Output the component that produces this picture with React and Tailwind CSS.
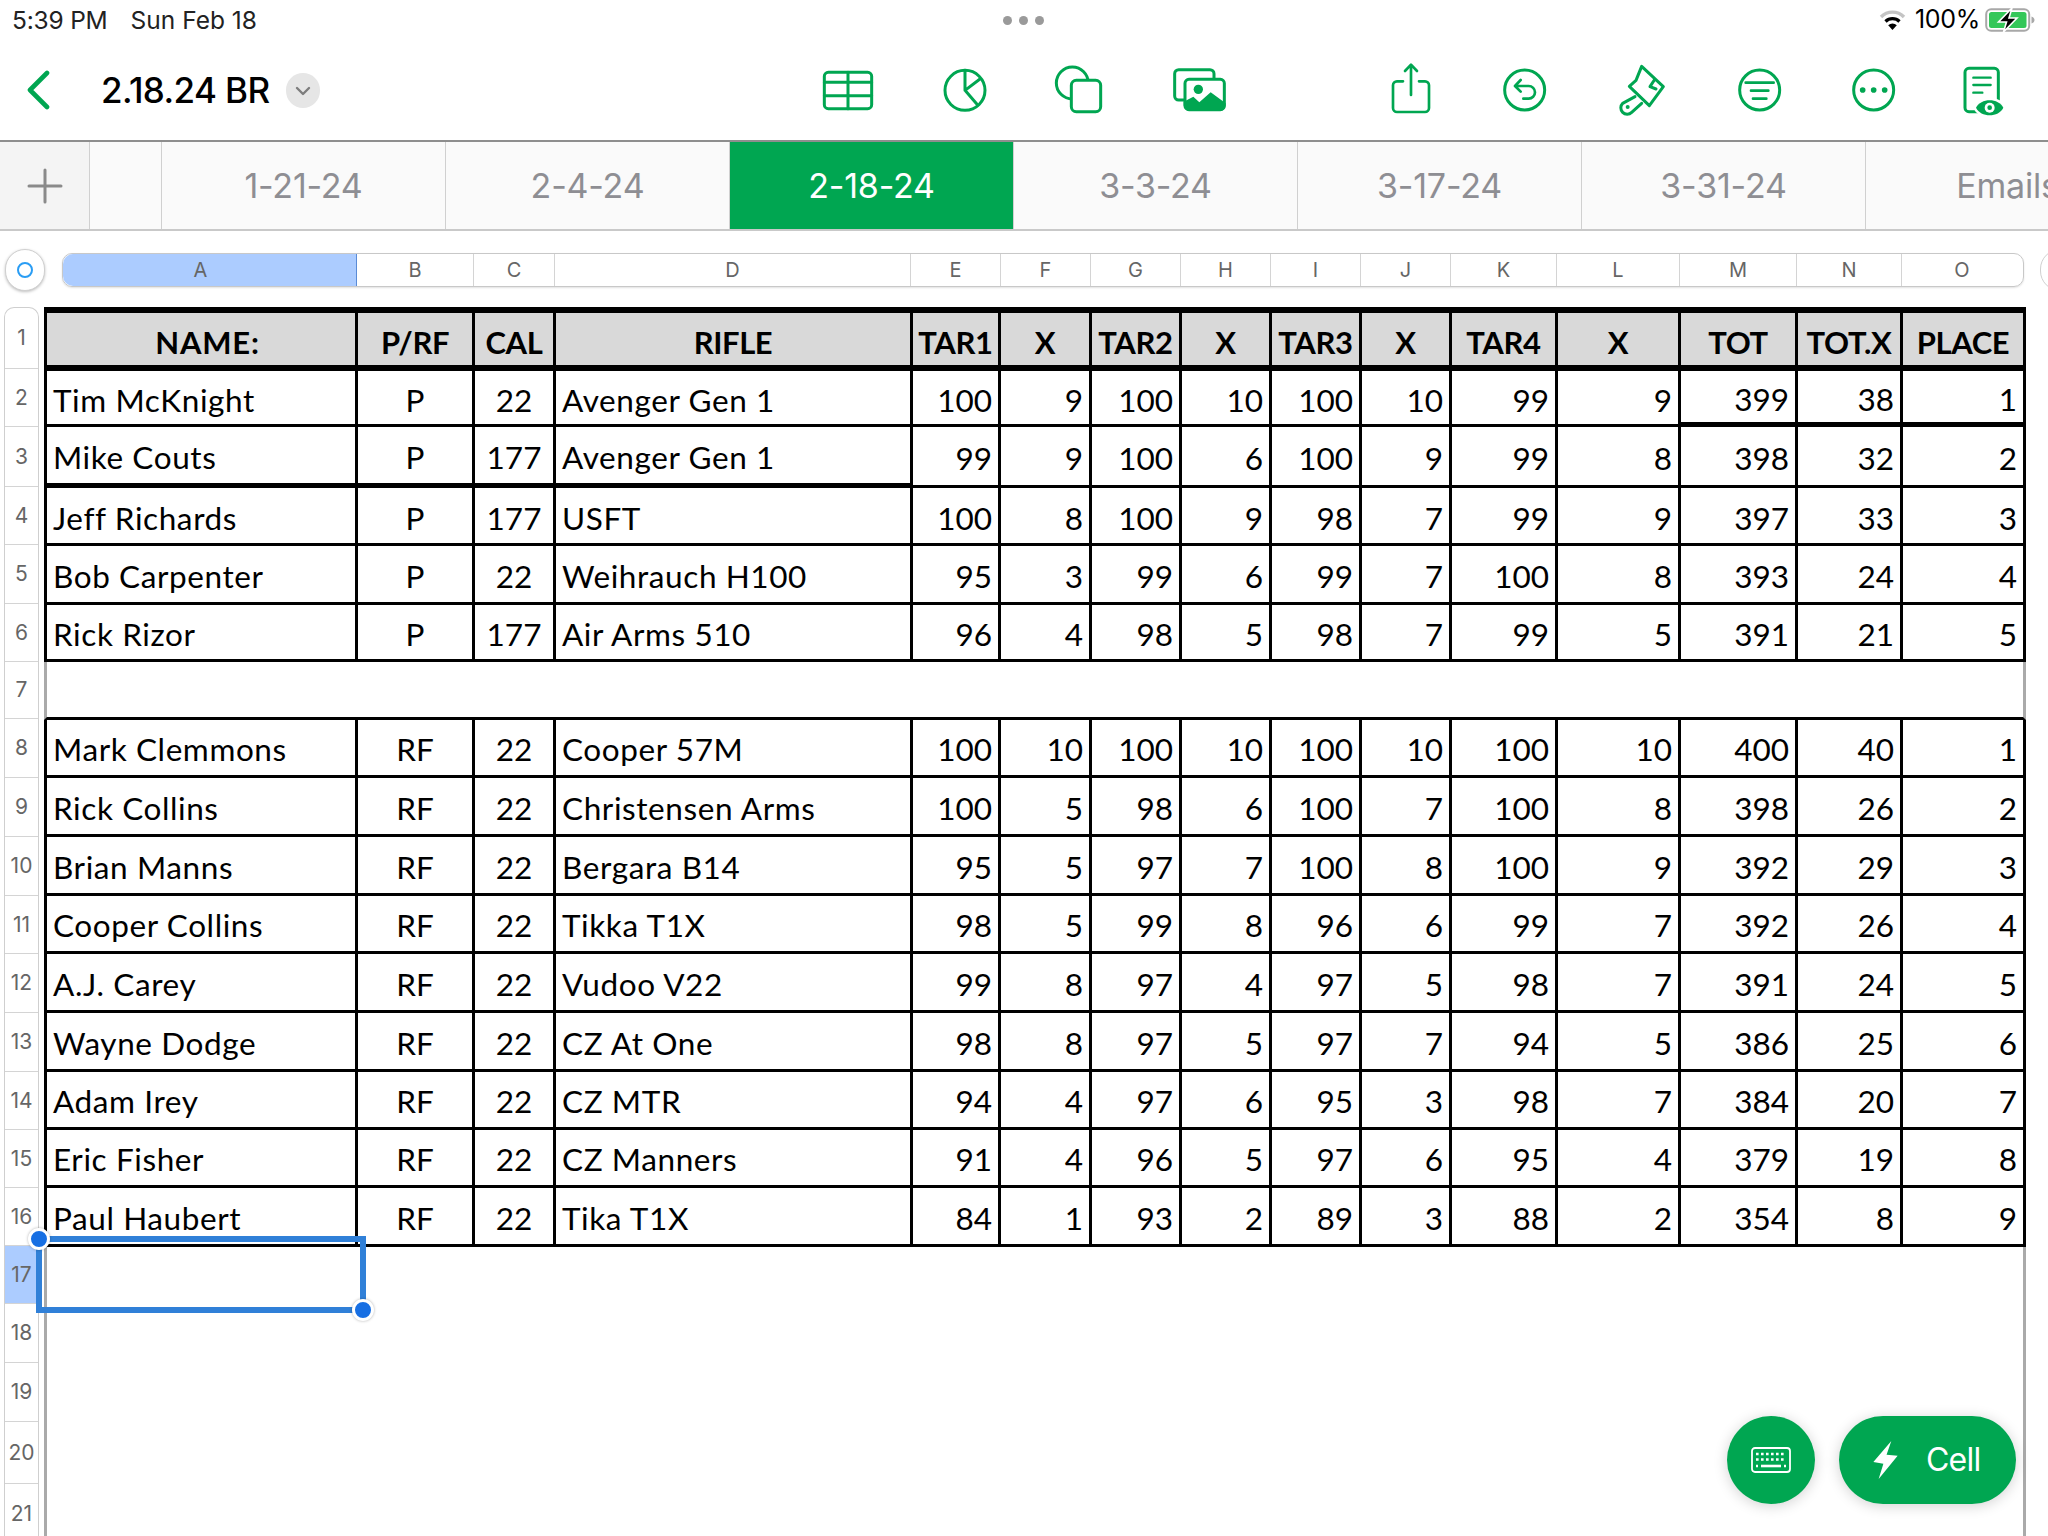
import React from "react";

const G = "#00a651";
const colW = ["w-[311px]","w-[117px]","w-[81px]","w-[357px]","w-[88px]","w-[91px]","w-[90px]","w-[90px]","w-[90px]","w-[90px]","w-[106px]","w-[123px]","w-[117px]","w-[105px]","w-[123px]"];
const align = (i) => (i === 0 || i === 3 ? "justify-start pl-[6px] tracking-[0.6px]" : i === 1 || i === 2 ? "justify-center" : "justify-end pr-[6px]");

const headers = ["NAME:","P/RF","CAL","RIFLE","TAR1","X","TAR2","X","TAR3","X","TAR4","X","TOT","TOT.X","PLACE"];
const group1 = [
  ["Tim McKnight","P","22","Avenger Gen 1","100","9","100","10","100","10","99","9","399","38","1"],
  ["Mike Couts","P","177","Avenger Gen 1","99","9","100","6","100","9","99","8","398","32","2"],
  ["Jeff Richards","P","177","USFT","100","8","100","9","98","7","99","9","397","33","3"],
  ["Bob Carpenter","P","22","Weihrauch H100","95","3","99","6","99","7","100","8","393","24","4"],
  ["Rick Rizor","P","177","Air Arms 510","96","4","98","5","98","7","99","5","391","21","5"],
];
const group2 = [
  ["Mark Clemmons","RF","22","Cooper 57M","100","10","100","10","100","10","100","10","400","40","1"],
  ["Rick Collins","RF","22","Christensen Arms","100","5","98","6","100","7","100","8","398","26","2"],
  ["Brian Manns","RF","22","Bergara B14","95","5","97","7","100","8","100","9","392","29","3"],
  ["Cooper Collins","RF","22","Tikka T1X","98","5","99","8","96","6","99","7","392","26","4"],
  ["A.J. Carey","RF","22","Vudoo V22","99","8","97","4","97","5","98","7","391","24","5"],
  ["Wayne Dodge","RF","22","CZ At One","98","8","97","5","97","7","94","5","386","25","6"],
  ["Adam Irey","RF","22","CZ MTR","94","4","97","6","95","3","98","7","384","20","7"],
  ["Eric Fisher","RF","22","CZ Manners","91","4","96","5","97","6","95","4","379","19","8"],
  ["Paul Haubert","RF","22","Tika T1X","84","1","93","2","89","3","88","2","354","8","9"],
];
const h1 = ["h-[56px]","h-[61px]","h-[58px]","h-[59px]","h-[57px]"];
const h2 = ["h-[58px]","h-[59px]","h-[59px]","h-[58px]","h-[59px]","h-[59px]","h-[58px]","h-[58px]","h-[59px]"];
const rowH = ["h-[61px]","h-[58px]","h-[60px]","h-[58px]","h-[59px]","h-[58px]","h-[57px]","h-[59px]","h-[59px]","h-[59px]","h-[58px]","h-[59px]","h-[59px]","h-[58px]","h-[58px]","h-[58px]","h-[58px]","h-[59px]","h-[59px]","h-[62px]","h-[60px]"];
const colBar = [
  ["A","w-[294px]"],["B","w-[117px]"],["C","w-[81px]"],["D","w-[356px]"],["E","w-[90px]"],["F","w-[90px]"],["G","w-[90px]"],["H","w-[90px]"],["I","w-[90px]"],["J","w-[90px]"],["K","w-[106px]"],["L","w-[123px]"],["M","w-[117px]"],["N","w-[105px]"],["O","w-[121px]"],
];
const tabs = ["1-21-24","2-4-24","2-18-24","3-3-24","3-17-24","3-31-24","Emails"];

function Ico({ children, className = "" }) {
  return (
    <svg width="100" height="75" viewBox="0 0 300 225" fill="none" stroke={G} strokeWidth="9" strokeLinecap="round" strokeLinejoin="round" className={"shrink-0 " + className}>
      {children}
    </svg>
  );
}

function Row({ cells, height, rowIdx, pad }) {
  return (
    <div className={"flex border-l-[3px] border-black " + height}>
      {cells.map((c, i) => {
        const thick = (rowIdx === 1 && i < 4) || (rowIdx === 0 && i >= 12);
        return (
          <div key={i} className={"flex items-center border-r-[3px] border-black text-[31.5px] text-black whitespace-nowrap " + pad + " " + colW[i] + " " + align(i) + " " + (thick ? "border-b-[5px]" : "border-b-[3px]")}>
            {c}
          </div>
        );
      })}
    </div>
  );
}

export default function App() {
  return (
    <div className="relative w-[2048px] h-[1536px] overflow-hidden bg-white [font-family:Inter,sans-serif]">
      {/* status bar */}
      <div className="relative flex items-center h-[40px] pl-[12px] pr-[13px] text-[24.5px] text-[#222]">
        <span className="tracking-[-0.2px]">5:39 PM</span>
        <span className="ml-[23px] tracking-[0px]">Sun Feb 18</span>
        <div className="absolute left-[1003px] top-[16px] flex gap-[7px]">
          <span className="w-[9px] h-[9px] rounded-full bg-[#9a9a9a]" />
          <span className="w-[9px] h-[9px] rounded-full bg-[#9a9a9a]" />
          <span className="w-[9px] h-[9px] rounded-full bg-[#9a9a9a]" />
        </div>
        <div className="ml-auto flex items-center">
          <svg width="27" height="22" viewBox="0 0 27 22" fill="none" strokeLinecap="butt">
            <path d="M2 8 A16 16 0 0 1 25 8" stroke="#c4c4c4" strokeWidth="3.4" />
            <path d="M6.5 12.5 A10 10 0 0 1 20.5 12.5" stroke="#000" strokeWidth="3.2" />
            <path d="M13.5 21 L9.2 16.2 A6.5 6.5 0 0 1 17.8 16.2 Z" fill="#000" />
          </svg>
          <span className="ml-[9px] text-[25px] tracking-[-0.3px] text-black">100%</span>
          <svg width="50" height="26" viewBox="0 0 50 26" className="ml-[5px]">
            <rect x="1.2" y="2.2" width="43" height="21.6" rx="5" fill="none" stroke="#a8a8a8" strokeWidth="2" />
            <rect x="4" y="5" width="37.5" height="16" rx="2.5" fill="#34c759" />
            <path d="M46.5 9.5 C48.5 10 49.5 11.5 49.5 13 C49.5 14.5 48.5 16 46.5 16.5 Z" fill="#a8a8a8" />
            <path d="M27 1 L13.5 15 L21.5 15 L18.5 25 L32 11 L24 11 Z" fill="#000" stroke="#fff" strokeWidth="1.6" />
          </svg>
        </div>
      </div>

      {/* toolbar */}
      <div className="flex items-start h-[102px] pt-[15px] pl-[26px] pr-[8px] border-b-2 border-[#8e8e8e]">
        <svg width="24" height="40" viewBox="0 0 24 40" fill="none" stroke={G} strokeWidth="4.6" strokeLinecap="round" strokeLinejoin="round" className="mt-[15px]">
          <path d="M21 3 L4 20 L21 37" />
        </svg>
        <div className="ml-[51px] mt-[14px] text-[35px] leading-[42px] font-medium text-black tracking-[-0.6px]">2.18.24 BR</div>
        <div className="ml-[16px] mt-[18px] flex items-center justify-center w-[34px] h-[35px] rounded-full bg-[#e6e6e6]">
          <svg width="16" height="10" viewBox="0 0 16 10" fill="none" stroke="#7d7d7d" strokeWidth="2.4" strokeLinecap="round" strokeLinejoin="round">
            <path d="M2 2 L8 8 L14 2" />
          </svg>
        </div>
        <div className="ml-auto flex items-start">
          <Ico>
            <rect x="79" y="52" width="142" height="109" rx="12" />
            <path d="M79 82 H221 M79 122 H221 M150 52 V161" />
          </Ico>
          <Ico className="ml-[17px]">
            <circle cx="150" cy="106" r="60" />
            <path d="M150 46 V106 L195 72 M150 106 L188 150" />
          </Ico>
          <Ico className="ml-[13px]">
            <circle cx="133" cy="84" r="48" />
            <rect x="130" y="76" width="88" height="94" rx="15" fill="#fff" />
          </Ico>
          <Ico className="ml-[32px]">
            <rect x="44" y="44" width="118" height="91" rx="12" />
            <rect x="75" y="73" width="118" height="91" rx="12" fill="#fff" />
            <circle cx="115" cy="103" r="14" fill={G} stroke="none" />
            <path d="M71 150 V140 L100 125 L118 142 L152 112 L197 145 V150 A18 18 0 0 1 180 168 H90 A18 18 0 0 1 71 150 Z" fill={G} stroke="none" />
          </Ico>
          <Ico className="ml-[101px]">
            <path d="M126 79 H108 A12 12 0 0 0 96 91 V159 A12 12 0 0 0 108 171 H192 A12 12 0 0 0 204 159 V91 A12 12 0 0 0 192 79 H174" strokeWidth="8" />
            <path d="M150 120 V30 M132 48 L150 29 L168 48" strokeWidth="8" />
          </Ico>
          <Ico className="ml-[29px]">
            <circle cx="104" cy="105" r="60" />
            <path d="M92 75 L75 93 L92 110 M76 93 H116 A19 19 0 0 1 116 131 H100" strokeWidth="8" />
          </Ico>
          <Ico className="ml-[10px]">
            <path d="M108 76 L125 34 L190 95 L165 72 L150 95 L168 102 M108 76 L88 94 L148 152 L190 95" strokeWidth="9" />
            <path d="M105 125 L68 145 A17 17 0 0 0 95 172 L125 145" strokeWidth="9" />
            <circle cx="83" cy="156" r="6" fill={G} stroke="none" />
          </Ico>
          <Ico className="ml-[25px]">
            <circle cx="104" cy="105" r="60" />
            <path d="M62 83 H146 M78 107 H130 M84 131 H124" strokeWidth="8" />
          </Ico>
          <Ico className="ml-[14px]">
            <circle cx="104" cy="105" r="60" />
            <circle cx="71" cy="105" r="8.5" fill={G} stroke="none" />
            <circle cx="104" cy="105" r="8.5" fill={G} stroke="none" />
            <circle cx="137" cy="105" r="8.5" fill={G} stroke="none" />
          </Ico>
          <Ico className="ml-[1px]">
            <rect x="75" y="40" width="100" height="130" rx="12" />
            <path d="M100 68 H152 M100 90 H152 M100 113 H127" strokeWidth="7" />
            <path d="M102 158 C120 122 178 122 196 158 C178 194 120 194 102 158 Z" fill="#fff" stroke="#fff" strokeWidth="6" />
            <path d="M108 158 C122 128 176 128 190 158 C176 188 122 188 108 158 Z" fill={G} stroke="none" />
            <circle cx="149" cy="158" r="15" fill="#fff" stroke="none" />
            <circle cx="149" cy="158" r="7" fill={G} stroke="none" />
          </Ico>
        </div>
      </div>

      {/* tab bar */}
      <div className="flex h-[89px] border-b-2 border-[#c9c9c9] bg-[#fafafa]">
        <div className="flex items-center justify-center shrink-0 w-[90px] bg-[#f4f4f4] border-r border-[#d0d0d0]">
          <svg width="36" height="36" viewBox="0 0 36 36" stroke="#8a8a8a" strokeWidth="3" strokeLinecap="round">
            <path d="M18 2 V34 M2 18 H34" />
          </svg>
        </div>
        <div className="shrink-0 w-[72px] border-r border-[#d0d0d0]" />
        {tabs.map((t) => (
          <div key={t} className={"flex items-center justify-center shrink-0 w-[284px] text-[34px] tracking-[-0.2px] border-r border-[#d0d0d0] " + (t === "2-18-24" ? "bg-[#00a651] text-white" : "text-[#8e8e93]")}>
            {t}
          </div>
        ))}
      </div>

      {/* column header bar */}
      <div className="flex items-center h-[76px] pl-[5px] pt-[2px]">
        <div className="flex items-center justify-center shrink-0 w-[40px] h-[42px] rounded-full bg-white border border-[#d0d0d0] shadow-[0_1px_3px_rgba(0,0,0,0.25)]">
          <span className="w-[16px] h-[16px] rounded-full border-[2.5px] border-[#2a9df4]" />
        </div>
        <div className="flex ml-[17px] h-[34px] shrink-0 rounded-[10px] border border-[#c8c8c8] shadow-[0_1px_2px_rgba(0,0,0,0.12)] text-[20px] text-[#666]">
          {colBar.map(([l, w], i) => (
            <div key={l} className={"flex items-center justify-center border-r " + w + " " + (i === 0 ? "bg-[#acccff] border-[#5a8bd6] rounded-l-[10px] pr-[18px]" : i === 14 ? "border-transparent" : "border-[#d4d4d4]")}>
              {l}
            </div>
          ))}
        </div>
        <div className="shrink-0 ml-[16px] w-[40px] h-[42px] rounded-full bg-white border border-[#d0d0d0]" />
      </div>

      {/* sheet */}
      <div className="relative flex h-[1229px] pl-[4px]">
        <div className="shrink-0 w-[35px] border-x border-[#cfcfcf] rounded-t-[10px] border-t text-[21px] text-[#666] h-[1240px]">
          {rowH.map((h, i) => (
            <div key={i} className={"flex items-center justify-center border-b border-[#d4d4d4] " + h + " " + (i === 16 ? "bg-[#acccff]" : "")}>
              {i + 1}
            </div>
          ))}
        </div>
        <div className="flex flex-col shrink-0 ml-[5px] w-[1982px] [font-family:Lato,sans-serif]">
          <div className="flex h-[64px] border-t-[6px] border-l-[3px] border-black bg-[#d9d9d9]">
            {headers.map((c, i) => (
              <div key={i} className={"flex items-center justify-center border-r-[3px] border-b-[6px] border-black pt-[7px] text-[31px] font-bold text-black whitespace-nowrap " + colW[i] + " " + (i === 0 ? "pl-[13px] tracking-[0.8px]" : "tracking-[-0.4px]")}>
                {c}
              </div>
            ))}
          </div>
          {group1.map((r, i) => (
            <Row key={i} cells={r} height={h1[i]} rowIdx={i} pad="pt-[6px]" />
          ))}
          <div className="h-[58px] shrink-0 border-x-[3px] border-[#aaaaaa] border-b-[3px] border-b-black" />
          {group2.map((r, i) => (
            <Row key={i} cells={r} height={h2[i]} rowIdx={-1} pad="pt-[5px]" />
          ))}
          <div className="flex-1 border-x-[3px] border-[#aaaaaa]" />
        </div>

        {/* selection */}
        <div className="absolute left-[36px] top-[929px] w-[330px] h-[77px] border-[6px] border-[#3080d8]" />
        <div className="absolute left-[28px] top-[921px] w-[22px] h-[22px] rounded-full bg-[#176fe3] border-[3px] border-white shadow-[0_0_3px_rgba(0,0,0,0.3)]" />
        <div className="absolute left-[352px] top-[992px] w-[22px] h-[22px] rounded-full bg-[#176fe3] border-[3px] border-white shadow-[0_0_3px_rgba(0,0,0,0.3)]" />
      </div>

      {/* floating buttons */}
      <div className="absolute left-[1727px] top-[1416px] flex items-center gap-[24px]">
        <div className="flex items-center justify-center w-[88px] h-[88px] rounded-full bg-[#00a651] shadow-[0_2px_14px_rgba(0,0,0,0.18)]">
          <svg width="40" height="26" viewBox="0 0 40 26" fill="none" stroke="#fff" strokeWidth="1.8">
            <rect x="1" y="1" width="38" height="24" rx="3" />
            <path d="M5 7 H35 M5 12.5 H35" strokeWidth="2.6" strokeDasharray="2.6 2.4" />
            <path d="M10 19 H30" strokeWidth="2.6" />
            <path d="M5 19 H7 M33 19 H35" strokeWidth="2.6" />
          </svg>
        </div>
        <div className="flex items-center w-[177px] h-[88px] pl-[34px] rounded-full bg-[#00a651] text-white shadow-[0_2px_14px_rgba(0,0,0,0.18)]">
          <svg width="25" height="38" viewBox="0 0 23 36" fill="#fff">
            <path d="M17 0 L0 20 L9.5 21.5 L5 36 L23 14 L12.5 13 Z" />
          </svg>
          <span className="ml-[28px] text-[32px] tracking-[-0.8px]">Cell</span>
        </div>
      </div>
    </div>
  );
}
